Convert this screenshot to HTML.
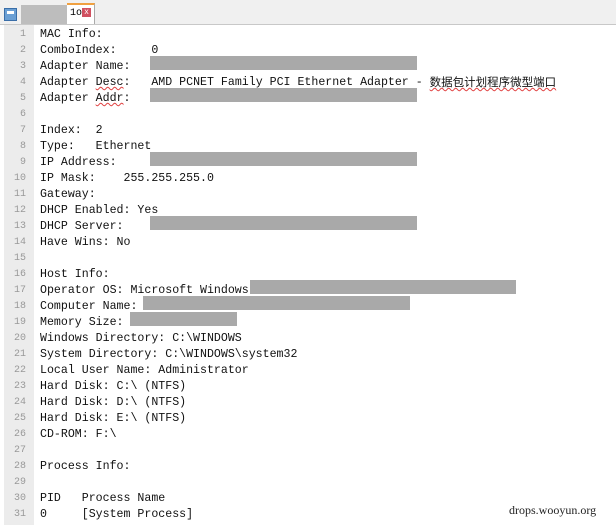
<!DOCTYPE html>
<html><head><meta charset="utf-8"><style>
body{margin:0;width:616px;height:525px;background:#fff;position:relative;overflow:hidden;font-family:"Liberation Mono",monospace;}
.tabbar{position:absolute;left:0;top:0;width:616px;height:24px;background:#f0f0f0;border-bottom:1px solid #c8c8c8;}
.gutter{position:absolute;left:4px;top:25px;width:30px;height:500px;background:#ececec;}
.ln{position:absolute;left:4px;width:22px;text-align:right;color:#999;font-size:10px;line-height:16px;height:16px;}
.tx{position:absolute;left:40px;font-size:11.6px;line-height:16px;height:16px;color:#111;white-space:pre;overflow:visible;}
.box{position:absolute;height:14px;background:#a9a9a9;}
.u{display:inline-block;line-height:14px;text-decoration:underline wavy #e04040;text-decoration-thickness:1px;}
.cjk{font-family:"Noto Sans CJK SC",sans-serif;font-size:11.5px;line-height:14px;vertical-align:top;}
</style></head><body>
<div class="tabbar">
 <div style="position:absolute;left:4px;top:8px;width:13px;height:13px;background:#6a9fd4;border:1px solid #3a6ea8;box-sizing:border-box"><div style="margin:2px 2px 0;height:3px;background:#fff"></div></div>
 <div style="position:absolute;left:21px;top:5px;width:46px;height:19px;background:#bdbdbd"></div>
 <div style="position:absolute;left:67px;top:3px;width:28px;height:21px;background:#fff;border-top:2px solid #f0a040;border-right:1px solid #aaa;box-sizing:border-box;font-size:10px;line-height:18px;padding-left:3px">1o<span style="display:inline-block;width:9px;height:9px;background:#d05060;color:#fff;font-size:8px;line-height:9px;text-align:center;vertical-align:middle">x</span></div>
</div>
<div class="gutter"></div>
<div id="c"></div>
<div class="box" style="left:150px;top:56px;width:267px"></div>
<div class="box" style="left:150px;top:88px;width:267px"></div>
<div class="box" style="left:150px;top:152px;width:267px"></div>
<div class="box" style="left:150px;top:216px;width:267px"></div>
<div class="box" style="left:250px;top:280px;width:266px"></div>
<div class="box" style="left:143px;top:296px;width:267px"></div>
<div class="box" style="left:130px;top:312px;width:107px"></div>
<div style="position:absolute;left:509px;top:503px;font-family:'Liberation Serif',serif;font-size:12px;color:#222">drops.wooyun.org</div>
<script>
var L=["MAC Info:","ComboIndex:     0","Adapter Name:","Adapter <span class=u>Desc</span>:   AMD PCNET Family PCI Ethernet Adapter - <span class=\"u cjk\">数据包计划程序微型端口</span>","Adapter <span class=u>Addr</span>:","","Index:  2","Type:   Ethernet","IP Address:","IP Mask:    255.255.255.0","Gateway:","DHCP Enabled: Yes","DHCP Server:","Have Wins: No","","Host Info:","Operator OS: Microsoft Windows","Computer Name:","Memory Size:","Windows Directory: C:\\WINDOWS","System Directory: C:\\WINDOWS\\system32","Local User Name: Administrator","Hard Disk: C:\\ (NTFS)","Hard Disk: D:\\ (NTFS)","Hard Disk: E:\\ (NTFS)","CD-ROM: F:\\","","Process Info:","","PID   Process Name","0     [System Process]"];
var h="";for(var i=0;i<L.length;i++){var t=27+i*16;h+='<div class="ln" style="top:'+t+'px">'+(i+1)+'</div><div class="tx" style="top:'+t+'px">'+L[i]+'</div>';}
document.getElementById("c").innerHTML=h;
</script>
</body></html>
